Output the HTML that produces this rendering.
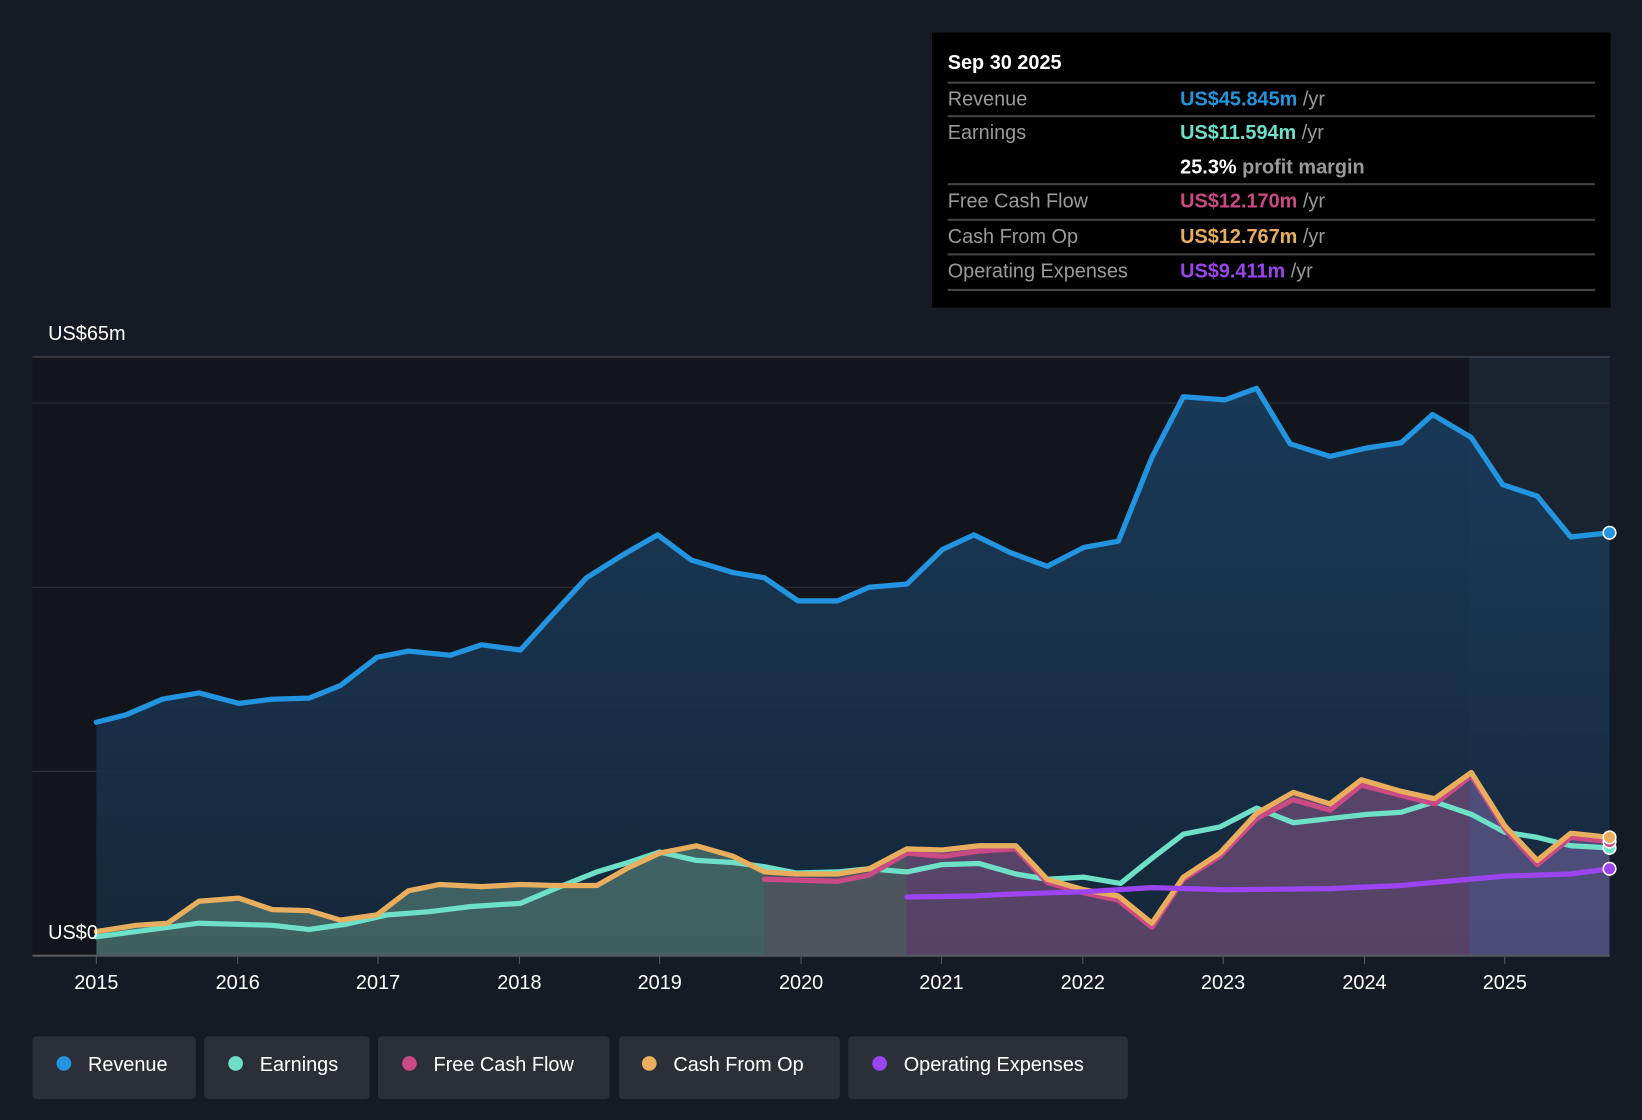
<!DOCTYPE html>
<html><head><meta charset="utf-8"><style>
html,body{margin:0;padding:0;background:#151b24;}
svg{display:block;font-family:"Liberation Sans",sans-serif;}
</style></head><body>
<svg width="1642" height="1120" viewBox="0 0 1568 1070" preserveAspectRatio="none">
<defs>
<linearGradient id="rg" x1="0" y1="0" x2="0" y2="1"><stop offset="0" stop-color="#1a3d5e" stop-opacity="0.9"/><stop offset="1" stop-color="#16293d" stop-opacity="0.9"/></linearGradient>
<clipPath id="c1"><rect x="92" y="300" width="638" height="620"/></clipPath>
<clipPath id="c2"><rect x="730" y="300" width="136" height="620"/></clipPath>
<clipPath id="c3"><rect x="866" y="300" width="537" height="620"/></clipPath>
<clipPath id="c4"><rect x="1403" y="300" width="134" height="620"/></clipPath>
</defs>
<rect width="1568" height="1070" fill="#151b24"/>
<rect x="31" y="341" width="1372" height="572" fill="#12161c"/>
<rect x="1403" y="341" width="134" height="572" fill="#1a2330"/>
<g stroke="#2e343d" stroke-width="1"><line x1="31" y1="341" x2="1537" y2="341" stroke="#4a4f57"/><line x1="31" y1="385" x2="1537" y2="385"/><line x1="31" y1="561" x2="1537" y2="561"/><line x1="31" y1="737" x2="1537" y2="737"/></g>
<path d="M92,690 L120,683 L155,668 L190,662 L228,672 L260,668 L295,667 L325,655 L360,628 L390,622 L430,626 L460,616 L497,621 L525,590 L560,552 L595,530 L628,511 L660,535 L700,547 L730,552 L762,574 L800,574 L830,561 L866,558 L900,525 L930,511 L965,528 L1000,541 L1035,523 L1068,517 L1100,437 L1130,379 L1170,382 L1200,371 L1232,424 L1270,436 L1305,428 L1338,423 L1368,396 L1405,418 L1435,463 L1468,474 L1500,513 L1537,509 L1537,913 L92,913Z" fill="url(#rg)"/>
<defs>
<path id="cfa" d="M92,890 L130,884 L160,882 L190,861 L228,858 L260,869 L295,870 L325,879 L360,874 L390,851 L420,845 L460,847 L497,845 L530,846 L570,846 L600,829 L630,815 L665,808 L700,818 L730,833 L760,835 L800,835 L830,830 L866,811 L900,812 L935,808 L970,808 L1000,840 L1035,850 L1068,856 L1100,882 L1130,838 L1165,815 L1200,777 L1235,757 L1270,768 L1300,745 L1338,756 L1370,763 L1405,738 L1437,789 L1468,822 L1500,796 L1537,800 L1537,913 L92,913Z"/>
</defs>
<use href="#cfa" clip-path="url(#c1)" fill="#6a9a86" fill-opacity="0.5"/>
<use href="#cfa" clip-path="url(#c2)" fill="#7a7a7a" fill-opacity="0.55"/>
<use href="#cfa" clip-path="url(#c3)" fill="#8e5a8a" fill-opacity="0.55"/>
<use href="#cfa" clip-path="url(#c4)" fill="#7a6aaa" fill-opacity="0.55"/>
<g fill="none" stroke-width="5" stroke-linejoin="round" stroke-linecap="round">
<path stroke="#2394df" d="M92,690 L120,683 L155,668 L190,662 L228,672 L260,668 L295,667 L325,655 L360,628 L390,622 L430,626 L460,616 L497,621 L525,590 L560,552 L595,530 L628,511 L660,535 L700,547 L730,552 L762,574 L800,574 L830,561 L866,558 L900,525 L930,511 L965,528 L1000,541 L1035,523 L1068,517 L1100,437 L1130,379 L1170,382 L1200,371 L1232,424 L1270,436 L1305,428 L1338,423 L1368,396 L1405,418 L1435,463 L1468,474 L1500,513 L1537,509"/>
<path stroke="#6ee0c8" d="M92,895 L130,890 L190,882 L260,884 L295,888 L330,883 L370,874 L410,871 L450,866 L497,863 L530,849 L570,833 L600,824 L630,814 L665,822 L700,824 L730,828 L760,834 L800,833 L830,830 L866,833 L900,826 L935,825 L970,835 L1000,840 L1035,838 L1070,844 L1100,820 L1130,797 L1165,790 L1200,772 L1235,786 L1270,782 L1305,778 L1338,776 L1370,766 L1405,778 L1437,795 L1468,800 L1500,808 L1537,810"/>
<path stroke="#c94a84" d="M730,840 L800,842 L830,836 L866,815 L900,818 L935,813 L970,811 L1000,843 L1035,853 L1068,860 L1100,886 L1130,840 L1165,818 L1200,782 L1235,764 L1270,774 L1300,750 L1338,760 L1370,768 L1405,741 L1437,792 L1468,826 L1500,800 L1537,804"/>
<path stroke="#e8ae5e" d="M92,890 L130,884 L160,882 L190,861 L228,858 L260,869 L295,870 L325,879 L360,874 L390,851 L420,845 L460,847 L497,845 L530,846 L570,846 L600,829 L630,815 L665,808 L700,818 L730,833 L760,835 L800,835 L830,830 L866,811 L900,812 L935,808 L970,808 L1000,840 L1035,850 L1068,856 L1100,882 L1130,838 L1165,815 L1200,777 L1235,757 L1270,768 L1300,745 L1338,756 L1370,763 L1405,738 L1437,789 L1468,822 L1500,796 L1537,800"/>
<path stroke="#9b45f0" d="M866,857 L930,856 L970,854 L1035,852 L1100,848 L1170,850 L1270,849 L1338,846 L1370,843 L1437,837 L1500,835 L1537,830"/>
</g>
<g stroke="#fff" stroke-width="1.5"><circle cx="1537" cy="509" r="6" fill="#2394df"/><circle cx="1537" cy="810" r="6" fill="#6ee0c8"/><circle cx="1537" cy="804" r="6" fill="#c94a84"/><circle cx="1537" cy="800" r="6" fill="#e8ae5e"/><circle cx="1537" cy="830" r="6" fill="#9b45f0"/></g>
<line x1="31" y1="913" x2="1537" y2="913" stroke="#555a62" stroke-width="2"/>
<g stroke="#555a62"><line x1="92" y1="914" x2="92" y2="921"/><line x1="227" y1="914" x2="227" y2="921"/><line x1="361" y1="914" x2="361" y2="921"/><line x1="496" y1="914" x2="496" y2="921"/><line x1="630" y1="914" x2="630" y2="921"/><line x1="765" y1="914" x2="765" y2="921"/><line x1="899" y1="914" x2="899" y2="921"/><line x1="1034" y1="914" x2="1034" y2="921"/><line x1="1168" y1="914" x2="1168" y2="921"/><line x1="1303" y1="914" x2="1303" y2="921"/><line x1="1437" y1="914" x2="1437" y2="921"/></g>
<g fill="#fff" font-size="19" text-anchor="middle"><text x="92" y="945">2015</text><text x="227" y="945">2016</text><text x="361" y="945">2017</text><text x="496" y="945">2018</text><text x="630" y="945">2019</text><text x="765" y="945">2020</text><text x="899" y="945">2021</text><text x="1034" y="945">2022</text><text x="1168" y="945">2023</text><text x="1303" y="945">2024</text><text x="1437" y="945">2025</text></g>
<text x="46" y="325" fill="#fff" font-size="19">US$65m</text>
<text x="46" y="897" fill="#fff" font-size="19">US$0</text>
<rect x="890" y="31" width="648" height="263" fill="#000"/>
<text x="905" y="66" fill="#fff" font-size="19" font-weight="bold">Sep 30 2025</text>
<g stroke="#444" stroke-width="2"><line x1="905" y1="79" x2="1523" y2="79"/><line x1="905" y1="111" x2="1523" y2="111"/><line x1="905" y1="176" x2="1523" y2="176"/><line x1="905" y1="210" x2="1523" y2="210"/><line x1="905" y1="243" x2="1523" y2="243"/><line x1="905" y1="277" x2="1523" y2="277"/></g>
<g font-size="19" fill="#9a9a9a"><text x="905" y="101">Revenue</text><text x="905" y="133">Earnings</text><text x="905" y="198">Free Cash Flow</text><text x="905" y="232">Cash From Op</text><text x="905" y="265">Operating Expenses</text></g>
<g font-size="19" font-weight="bold">
<text x="1127" y="101"><tspan fill="#2394df">US$45.845m</tspan><tspan fill="#9a9a9a" font-weight="normal"> /yr</tspan></text>
<text x="1127" y="133"><tspan fill="#6ee0c8">US$11.594m</tspan><tspan fill="#9a9a9a" font-weight="normal"> /yr</tspan></text>
<text x="1127" y="166"><tspan fill="#fff">25.3%</tspan><tspan fill="#9a9a9a"> profit margin</tspan></text>
<text x="1127" y="198"><tspan fill="#c94a84">US$12.170m</tspan><tspan fill="#9a9a9a" font-weight="normal"> /yr</tspan></text>
<text x="1127" y="232"><tspan fill="#e8ae5e">US$12.767m</tspan><tspan fill="#9a9a9a" font-weight="normal"> /yr</tspan></text>
<text x="1127" y="265"><tspan fill="#9b45f0">US$9.411m</tspan><tspan fill="#9a9a9a" font-weight="normal"> /yr</tspan></text>
</g>
<g fill="#2b2f38"><rect x="31" y="990" width="156" height="60" rx="4"/><rect x="195" y="990" width="158" height="60" rx="4"/><rect x="361" y="990" width="221" height="60" rx="4"/><rect x="591" y="990" width="211" height="60" rx="4"/><rect x="810" y="990" width="267" height="60" rx="4"/></g>
<circle cx="61" cy="1016" r="7" fill="#2394df"/><circle cx="225" cy="1016" r="7" fill="#6ee0c8"/><circle cx="391" cy="1016" r="7" fill="#c94a84"/><circle cx="620" cy="1016" r="7" fill="#e8ae5e"/><circle cx="840" cy="1016" r="7" fill="#9b45f0"/>
<g fill="#fff" font-size="19"><text x="84" y="1023">Revenue</text><text x="248" y="1023">Earnings</text><text x="414" y="1023">Free Cash Flow</text><text x="643" y="1023">Cash From Op</text><text x="863" y="1023">Operating Expenses</text></g>
</svg>
</body></html>
